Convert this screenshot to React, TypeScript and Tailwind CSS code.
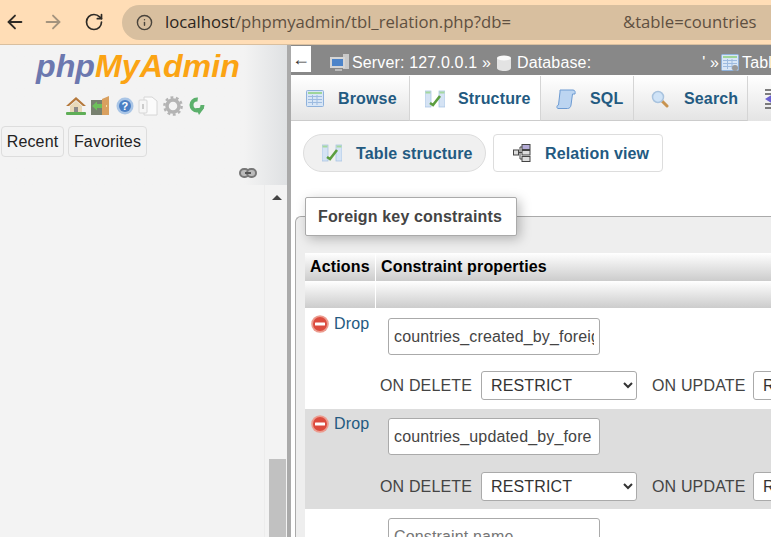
import React from 'react';
import { ArrowLeft, ArrowRight, RotateCw, Info } from 'lucide-react';

// small phpMyAdmin theme icons, drawn by hand
const HomeIcon = () => (
  <svg width="20" height="20" viewBox="0 0 20 20">
    <path d="M0 10 L10 1 L20 10 L17 10 L10 4 L3 10 Z" fill="#b5793c" />
    <path d="M4 10 L10 5 L16 10 V17 H4 Z" fill="#e8d9b8" />
    <rect x="8" y="11" width="4" height="6" fill="#8a8a8a" />
    <rect x="0" y="16" width="20" height="3" rx="1" fill="#5fae57" />
  </svg>
);

const ExitIcon = () => (
  <svg width="20" height="20" viewBox="0 0 20 20">
    <rect x="1" y="4" width="11" height="15" fill="#77806f" />
    <path d="M12 3 L19 0 V19 H12 Z" fill="#d9a05f" />
    <rect x="16" y="9" width="1" height="2" fill="#f3e2a0" />
    <path d="M2 10 L7 5.5 V8 H12 V12 H7 V14.5 Z" fill="#6cc05a" />
  </svg>
);

const HelpIcon = () => (
  <svg width="18" height="18" viewBox="0 0 18 18">
    <circle cx="9" cy="9" r="8.5" fill="#a9c5e6" />
    <circle cx="9" cy="9" r="6" fill="#4b7fc4" />
    <text x="9" y="13" textAnchor="middle" fontSize="11" fontWeight="700" fontFamily="Liberation Sans" fill="#fff">?</text>
  </svg>
);

const DocsIcon = () => (
  <svg width="20" height="20" viewBox="0 0 20 20">
    <path d="M6 1 H14 L19 5 V19 H6 Z" fill="#fbfbfb" stroke="#d6d6d6" />
    <rect x="1" y="4" width="8" height="13" rx="1" fill="#f6f6f6" stroke="#d6d6d6" />
    <rect x="4" y="8" width="2" height="5" fill="#cccccc" />
  </svg>
);

const GearIcon = () => (
  <svg width="20" height="20" viewBox="0 0 20 20">
    <circle cx="10" cy="10" r="6" fill="none" stroke="#b4b4b4" strokeWidth="3.5" />
    <circle cx="10" cy="10" r="8.6" fill="none" stroke="#b4b4b4" strokeWidth="2.5" strokeDasharray="2.8 2.6" />
  </svg>
);

const ReloadIcon = () => (
  <svg width="16" height="20" viewBox="0 0 16 20">
    <circle cx="8" cy="9" r="5.5" fill="none" stroke="#5cb06c" strokeWidth="4" strokeDasharray="26 8" />
    <path d="M7 12 H15 L10 19 Z" fill="#5cb06c" />
  </svg>
);

const ChainIcon = () => (
  <svg width="18" height="10" viewBox="0 0 18 10">
    <rect x="1" y="1" width="9" height="8" rx="4" fill="#bbb" stroke="#777" strokeWidth="2" />
    <rect x="8" y="1" width="9" height="8" rx="4" fill="#bbb" stroke="#777" strokeWidth="2" />
    <rect x="6" y="4" width="6" height="2" fill="#555" />
  </svg>
);

const ServerIcon = () => (
  <svg width="20" height="18" viewBox="0 0 20 18">
    <rect x="13" y="0" width="6" height="15" fill="#c9c9c9" />
    <rect x="0" y="3" width="15" height="11" fill="#d5d5d5" />
    <rect x="2" y="5" width="11" height="7" fill="#4d84c9" />
    <rect x="5" y="15" width="7" height="2" fill="#bbb" />
  </svg>
);

const DbIcon = () => (
  <svg width="14" height="16" viewBox="0 0 14 16">
    <path d="M0 3 V13 C0 17 14 17 14 13 V3 Z" fill="#e3e3e3" />
    <ellipse cx="7" cy="3" rx="7" ry="2.6" fill="#fafafa" />
  </svg>
);

const TableIcon = ({ gear = false }: { gear?: boolean }) => (
  <svg width="18" height="18" viewBox="0 0 18 18">
    <rect x="0.5" y="0.5" width="17" height="16" rx="1" fill="#d8e6f6" stroke="#8fb2dc" />
    <rect x="2" y="2" width="14" height="2" fill="#9ed59a" />
    <path d="M2 6.5 H16 M2 9.5 H16 M2 12.5 H16 M6.5 5 V15 M11 5 V15" stroke="#9dbbe0" />
    {gear && <circle cx="14" cy="14" r="3" fill="#999" />}
  </svg>
);

const StructureIcon = () => (
  <svg width="20" height="18" viewBox="0 0 20 18">
    <rect x="0" y="1" width="6" height="16" fill="#d5e3f4" stroke="#a3c0e2" strokeWidth="0.7" />
    <rect x="14" y="1" width="6" height="16" fill="#d5e3f4" stroke="#a3c0e2" strokeWidth="0.7" />
    <rect x="0.5" y="1.5" width="5" height="2" fill="#a5d8a0" />
    <rect x="14.5" y="1.5" width="5" height="2" fill="#a5d8a0" />
    <path d="M5 13 L8 15 L15 6" fill="none" stroke="#5c9e3f" strokeWidth="2.6" />
  </svg>
);

const SqlIcon = () => (
  <svg width="20" height="20" viewBox="0 0 20 20">
    <path d="M4 1 H17 C19 1 19.5 3 19 5 H16.5 L15 16 C14.8 18 13.5 19.5 11.5 19.5 H2 C0.5 19.5 0.5 16 2.5 16 L4 3 C4 2 4 1.5 4 1 Z" fill="#bcd5f1" stroke="#6d9bd2" />
  </svg>
);

const SearchIcon = () => (
  <svg width="18" height="18" viewBox="0 0 18 18">
    <path d="M10 10 L16 16" stroke="#c8934f" strokeWidth="3" strokeLinecap="round" />
    <circle cx="7" cy="7" r="5.5" fill="#cfe3f7" stroke="#a9c3de" strokeWidth="1.5" />
  </svg>
);

const RelationIcon = () => (
  <svg width="18" height="18" viewBox="0 0 18 18">
    <rect x="0.5" y="6" width="5" height="5" fill="#ddd" stroke="#444" />
    <rect x="9" y="0.5" width="8" height="5" fill="#b4acd6" stroke="#444" />
    <rect x="9" y="6.5" width="8" height="4.5" fill="#ddd" stroke="#444" />
    <rect x="9" y="12.5" width="8" height="5" fill="#ddd" stroke="#444" />
    <path d="M5 8.5 H9 M7 3 V15 M7 3 H9 M7 15 H9" stroke="#444" fill="none" />
  </svg>
);

const DropIcon = () => (
  <svg width="18" height="18" viewBox="0 0 18 18">
    <circle cx="9" cy="9" r="8.8" fill="#ec9c8f" />
    <circle cx="9" cy="9" r="7" fill="#dc4b3e" />
    <rect x="4" y="7.5" width="10" height="3" rx="0.5" fill="#fff" />
  </svg>
);

const MoreIcon = () => (
  <svg width="8" height="22" viewBox="0 0 8 22">
    <path d="M0 2 H8 M0 6 H8 M0 16 H8 M0 20 H8" stroke="#555" strokeWidth="1.5" />
    <path d="M0 11 L8 6 V16 Z" fill="#6a5fd0" />
  </svg>
);

const tabs = [
  { label: 'Browse', icon: <TableIcon />, width: 'w-[119px]', gap: 'gap-[14px]', pad: 'pl-[15px]' },
  { label: 'Structure', icon: <StructureIcon />, width: 'w-[131px]', gap: 'gap-[13px]', pad: 'pl-[15px]', active: true },
  { label: 'SQL', icon: <SqlIcon />, width: 'w-[93px]', gap: 'gap-[14px]', pad: 'pl-[15px]' },
  { label: 'Search', icon: <SearchIcon />, width: 'w-[114px]', gap: 'gap-[15px]', pad: 'pl-[17px]' },
];

function ConstraintRow({ name, shaded }: { name: string; shaded: boolean }) {
  return (
    <div className={`flex w-[470px] shrink-0 ${shaded ? 'h-[100px] bg-[#dddddd]' : 'h-[101px] bg-white'}`}>
      <div className={`w-[75px] shrink-0 pl-[6px] ${shaded ? 'pt-[3px]' : 'pt-[4px]'}`}>
        <div className="flex items-center gap-[5px] text-[#235a81]">
          <DropIcon />
          <span>Drop</span>
        </div>
      </div>
      <div className={`min-w-0 flex-1 ${shaded ? 'pt-[9px]' : 'pt-[10px]'}`}>
        <input
          readOnly
          value={name}
          className="ml-[8px] block h-[37px] w-[212px] rounded-[3px] border border-[#aaaaaa] bg-white px-[5px] tracking-[0.15px] text-[#444444]"
        />
        <div className={`flex h-[30px] w-[500px] items-center whitespace-nowrap text-[#444444] ${shaded ? 'mt-[16px]' : 'mt-[15px]'}`}>
          <span className="w-[93px] shrink-0 pt-[2px]">ON DELETE</span>
          <select className="ml-[8px] h-[29px] w-[156px] shrink-0 rounded-[3px] border border-[#aaaaaa] bg-white pl-[5px] text-[#333333]">
            <option>RESTRICT</option>
          </select>
          <span className="ml-[15px] w-[93px] shrink-0 pt-[2px]">ON UPDATE</span>
          <select className="ml-[8px] h-[29px] w-[156px] shrink-0 rounded-[3px] border border-[#aaaaaa] bg-white pl-[5px] text-[#333333]">
            <option>RESTRICT</option>
          </select>
        </div>
      </div>
    </div>
  );
}

export default function App() {
  return (
    <div className="flex h-[537px] w-[771px] flex-col overflow-hidden bg-white font-['Liberation_Sans',Arial,sans-serif] text-[16px] tracking-[0.15px]">
      {/* browser toolbar */}
      <div className="flex h-[45px] shrink-0 items-center border-b border-[#d9bf9f] bg-[#ffddb6]">
        <ArrowLeft size={22} strokeWidth={2} className="ml-[4px] shrink-0 text-[#2d2a26]" />
        <ArrowRight size={22} strokeWidth={2} className="ml-[16px] shrink-0 text-[#a3937e]" />
        <RotateCw size={20} strokeWidth={2} className="ml-[20px] shrink-0 text-[#2d2a26]" />
        <div className="ml-[18px] flex h-[35px] w-[680px] shrink-0 items-center rounded-l-full bg-[#d8bf9f] pl-[14px] font-['Open_Sans',sans-serif] text-[16.7px] tracking-normal whitespace-nowrap text-[#5f5041]">
          <Info size={17} strokeWidth={2} className="shrink-0 text-[#4a443c]" />
          <span className="ml-[12px] text-[#2c2620]">localhost</span>
          <span>/phpmyadmin/tbl_relation.php?db=</span>
          <span className="ml-[112px]">&amp;table=countries</span>
        </div>
      </div>

      <div className="flex min-h-0 flex-1">
        {/* navigation panel */}
        <div className="flex w-[287px] shrink-0 flex-col bg-[#f3f3f3]">
          <div className="h-[140px] shrink-0 bg-gradient-to-r from-[#f3f3f3] from-[85%] to-[#dfe1e3]">
            <div className="pt-[1px] pl-[36px] text-[32.2px] leading-[40px] font-bold tracking-normal italic">
              <span className="text-[#6c78af]">php</span>
              <span className="text-[#fba414]">MyAdmin</span>
            </div>
            <div className="mt-[10px] flex h-[20px] items-center pl-[66px]">
              <HomeIcon />
              <span className="ml-[4px]"><ExitIcon /></span>
              <span className="ml-[6px]"><HelpIcon /></span>
              <span className="ml-[4px]"><DocsIcon /></span>
              <span className="ml-[5px]"><GearIcon /></span>
              <span className="ml-[6px]"><ReloadIcon /></span>
            </div>
            <div className="mt-[10px] flex gap-[4px] pl-[1px] text-[#222222]">
              <div className="flex h-[31px] w-[63px] items-center justify-center rounded-[4px] border border-[#dddddd]">Recent</div>
              <div className="flex h-[31px] w-[79px] items-center justify-center rounded-[4px] border border-[#dddddd]">Favorites</div>
            </div>
            <div className="mt-[11px] flex justify-end pr-[30px]">
              <ChainIcon />
            </div>
          </div>
          <div className="flex min-h-0 flex-1">
            <div className="w-[265px] shrink-0 border-r border-[#ececec]" />
            <div className="flex w-[22px] shrink-0 flex-col items-center justify-between pl-[2px]">
              <div className="mt-[10px] h-0 w-0 border-x-[5px] border-b-[5px] border-x-transparent border-b-[#444444]" />
              <div className="h-[78px] w-[17px] bg-[#c1c1c1]" />
            </div>
          </div>
        </div>
        <div className="w-[4px] shrink-0 bg-[#aaaaaa]" />

        {/* main panel */}
        <div className="flex min-w-0 flex-1 flex-col overflow-hidden">
          <div className="flex h-[30px] shrink-0 items-center whitespace-nowrap bg-[#888888] pt-[6px] text-white">
            <div className="flex h-[26px] w-[20px] shrink-0 -translate-y-[4px] items-center justify-center bg-white text-[18px] leading-none text-[#333333]">←</div>
            <span className="ml-[19px] shrink-0"><ServerIcon /></span>
            <span className="ml-[2px] shrink-0">Server: 127.0.0.1 »</span>
            <span className="ml-[6px] shrink-0"><DbIcon /></span>
            <span className="ml-[6px] shrink-0">Database:</span>
            <span className="ml-[111px] shrink-0">' »</span>
            <span className="ml-[2px] shrink-0"><TableIcon gear /></span>
            <span className="ml-[3px] shrink-0">Table</span>
          </div>

          <div className="flex h-[46px] shrink-0 border-t border-white bg-gradient-to-b from-white to-[#e4e4e4]">
            {tabs.map((t) => (
              <div
                key={t.label}
                className={`flex shrink-0 items-center border-r border-b border-r-[#d5d5d5] border-b-[#cccccc] pt-[2px] font-bold text-[#235a81] ${t.width} ${t.gap} ${t.pad} ${t.active ? 'bg-white' : ''}`}
              >
                {t.icon}
                <span>{t.label}</span>
              </div>
            ))}
            <div className="flex shrink-0 items-center pl-[17px]">
              <MoreIcon />
            </div>
          </div>

          <div className="flex h-[95px] shrink-0 items-start gap-[7px] pt-[13px] pl-[12px] font-bold text-[#235a81]">
            <div className="flex h-[38px] w-[183px] items-center gap-[14px] rounded-full border border-[#dddddd] bg-[#f0f0f0] pl-[18px]">
              <StructureIcon />
              <span className="pt-[2px]">Table structure</span>
            </div>
            <div className="flex h-[38px] w-[170px] items-center gap-[14px] rounded-[4px] border border-[#dddddd] bg-white pl-[19px]">
              <RelationIcon />
              <span className="pt-[2px]">Relation view</span>
            </div>
          </div>

          <div className="ml-[4px] flex min-h-0 flex-1 flex-col rounded-tl-[6px] border-t border-l border-[#aaaaaa] bg-[#eeeeee] pl-[9px]">
            <div className="relative h-[36px] shrink-0">
              <div className="absolute -top-[20px] left-0 flex h-[39px] w-[212px] items-center rounded-[2px] border border-[#aaaaaa] bg-white pl-[12px] font-bold text-[#444444] shadow-[3px_3px_12px_rgba(0,0,0,0.25)]">
                Foreign key constraints
              </div>
            </div>
            <div className="flex h-[28px] w-[470px] shrink-0 items-center bg-gradient-to-b from-white to-[#cccccc] font-bold text-black">
              <div className="flex h-full w-[71px] items-center border-r border-white pl-[5px]">Actions</div>
              <div className="pl-[5px]">Constraint properties</div>
            </div>
            <div className="flex h-[27px] w-[470px] shrink-0 bg-gradient-to-b from-white to-[#cccccc]">
              <div className="h-full w-[71px] border-r border-white" />
            </div>
            <ConstraintRow name="countries_created_by_foreign" shaded={false} />
            <ConstraintRow name="countries_updated_by_fore" shaded />
            <div className="w-[470px] flex-1 bg-white pt-[9px] pl-[83px]">
              <input
                readOnly
                placeholder="Constraint name"
                className="block h-[37px] w-[212px] rounded-[3px] border border-[#aaaaaa] bg-white px-[5px] placeholder:text-[#757575]"
              />
            </div>
          </div>
        </div>
      </div>
    </div>
  );
}
